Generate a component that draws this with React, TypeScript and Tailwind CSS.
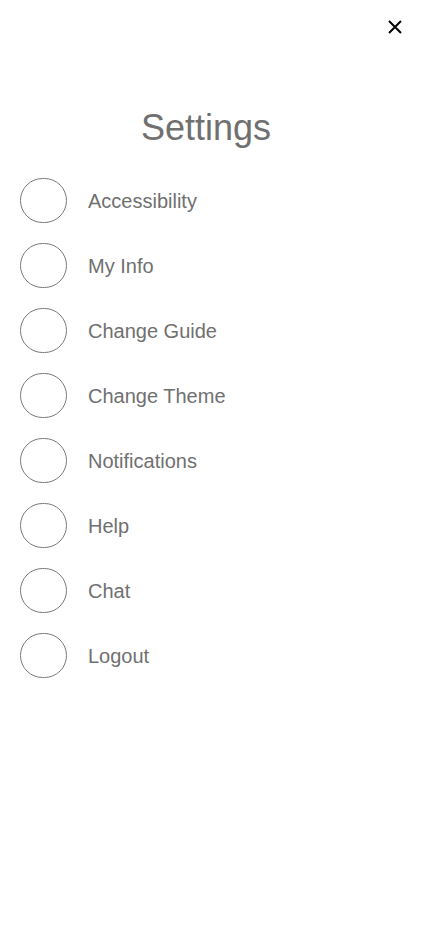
import React from "react";

const items = [
  "Accessibility",
  "My Info",
  "Change Guide",
  "Change Theme",
  "Notifications",
  "Help",
  "Chat",
  "Logout",
];

export default function App() {
  return (
    <div
      className="w-[428px] h-[926px] bg-white flex flex-col"
      style={{ fontFamily: '"Liberation Sans", Arial, sans-serif' }}
    >
      <div className="flex justify-end pt-[20px] pr-[26px]">
        <svg width="14" height="14" viewBox="0 0 14 14">
          <path d="M1 1 L13 13 M13 1 L1 13" stroke="#000" strokeWidth="2" />
        </svg>
      </div>
      <div className="pr-[16px] mt-[72px] flex justify-center">
        <h1 className="text-[36px] leading-[44px] text-[#707070]">Settings</h1>
      </div>
      <div className="flex flex-col gap-[20px] pl-[20px] mt-[28px]">
        {items.map((t) => (
          <div key={t} className="flex items-center h-[45px]">
            <div className="w-[47px] h-[45px] rounded-full border border-[#7a7a7a] shrink-0" />
            <span className="ml-[21px] text-[20px] text-[#707070]">{t}</span>
          </div>
        ))}
      </div>
    </div>
  );
}
